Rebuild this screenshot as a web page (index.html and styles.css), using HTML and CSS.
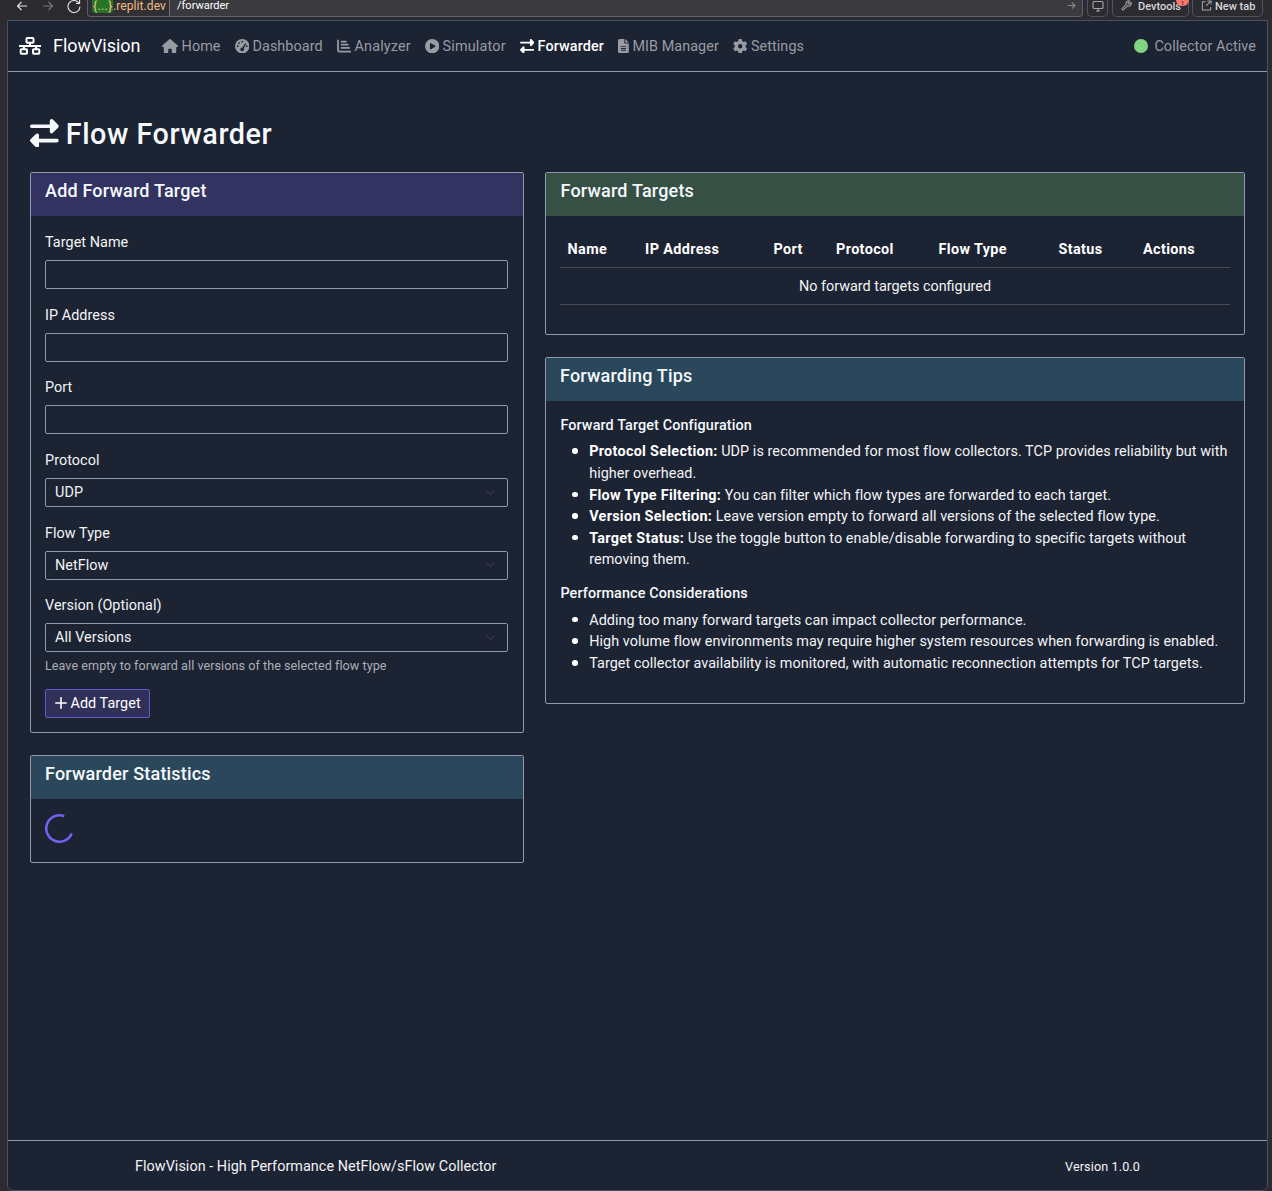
FILE: index.html
```html
<!DOCTYPE html>
<html lang="en">
<head>
<meta charset="utf-8">
<title>FlowVision - Flow Forwarder</title>
<link rel="stylesheet" href="styles.css">
</head>
<body>
<svg width="0" height="0" class="defs">
  <symbol id="swap" viewBox="0 0 512 512"><path d="M32 96l320 0 0-64c0-12.9 7.8-24.6 19.8-29.6s25.7-2.2 34.9 6.9l96 96c6 6 9.4 14.1 9.4 22.6s-3.4 16.6-9.4 22.6l-96 96c-9.2 9.2-22.9 11.9-34.9 6.9s-19.8-16.6-19.8-29.6l0-64L32 160c-17.7 0-32-14.3-32-32s14.3-32 32-32zM480 352c17.7 0 32 14.3 32 32s-14.3 32-32 32l-320 0 0 64c0 12.9-7.8 24.6-19.8 29.6s-25.7 2.2-34.9-6.9l-96-96c-6-6-9.4-14.1-9.4-22.6s3.4-16.6 9.4-22.6l96-96c9.2-9.2 22.9-11.9 34.9-6.9s19.8 16.6 19.8 29.6l0 64 320 0z"/></symbol>
</svg>
<div class="browser">
  <div class="toolbar">
    <svg class="tb-back" width="12" height="12" viewBox="0 0 12 12"><path d="M11 6H1.5M5.5 2l-4 4 4 4"/></svg>
    <svg class="tb-fwd" width="12" height="12" viewBox="0 0 12 12"><path d="M1 6h9.5M6.500 2l4 4-4 4"/></svg>
    <svg class="tb-reload" width="14" height="14" viewBox="0 0 14 14"><path d="M12 4.200A6 6 0 1 0 13 7.500M12.600 .8v3.700H9"/></svg>
    <div class="address">
      <span class="host"><span class="chip">{...}</span><span>.replit.dev</span></span>
      <span class="path">/forwarder</span>
      <svg class="go" width="9" height="9" viewBox="0 0 9 9"><path d="M.5 4.500h7.500M5 1.500l3 3-3 3"/></svg>
    </div>
    <div class="tb-btn screen"><svg width="12" height="12" viewBox="0 0 12 12"><rect x="1" y="1.500" width="10" height="7" rx="1"/><path d="M4 11h4M6 8.500V11"/></svg></div>
    <div class="tb-btn devtools"><svg width="11" height="11" viewBox="0 0 12 12"><path d="M1.500 10.500a1 1 0 0 1 0-1.500L5.500 5a3 3 0 0 1 4-3.800L7.700 3v1.400h1.400l1.800-1.800A3 3 0 0 1 7 6.500l-4 4a1 1 0 0 1-1.500 0z"/></svg><span>Devtools</span><span class="count">1</span></div>
    <div class="tb-btn newtab"><svg width="11" height="11" viewBox="0 0 12 12"><path d="M5 2H1.500v9h9V7.500M7 1h4v4M11 1L5.500 6.500"/></svg><span>New tab</span></div>
  </div>
  <div class="page">
    <nav class="navbar">
      <svg class="logo" width="22" height="18" viewBox="0 0 22 18"><rect x="7.500" y="1" width="7" height="4.800" rx=".8"/><rect x="1.700" y="12.200" width="6.300" height="4.600" rx=".8"/><rect x="14" y="12.200" width="6.300" height="4.600" rx=".8"/><path d="M11 6v3M0 9h22M4.900 9v3M17.100 9v3"/></svg>
      <span class="brand">FlowVision</span>
      <a class="nav n1"><svg width="16" height="14.400" viewBox="0 0 576 512"><path d="M575.8 255.500c0 18-15 32.100-32 32.100l-32 0 .7 160.200c0 2.700-.2 5.400-.5 8.100l0 16.200c0 22.100-17.900 40-40 40l-16 0c-1.100 0-2.200 0-3.300-.1c-1.400 .1-2.800 .1-4.200 .1L416 512l-24 0c-22.100 0-40-17.900-40-40l0-24 0-64c0-17.700-14.300-32-32-32l-64 0c-17.700 0-32 14.300-32 32l0 64 0 24c0 22.100-17.900 40-40 40l-24 0-31.900 0c-1.500 0-3-.1-4.500-.2c-1.200 .1-2.400 .2-3.600 .2l-16 0c-22.100 0-40-17.900-40-40l0-112c0-.9 0-1.900 .1-2.800l0-69.700-32 0c-18 0-32-14-32-32.100c0-9 3-17 10-24L266.400 8c7-7 15-8 22-8s15 2 21 7L564.800 231.500c8 7 12 15 11 24z"/></svg><span>Home</span></a>
      <a class="nav n2"><svg width="14.400" height="14.400" viewBox="0 0 512 512"><path fill-rule="evenodd" d="M256 0a256 256 0 1 0 0 512 256 256 0 1 0 0-512zM256 64a32 32 0 1 1 0 64 32 32 0 1 1 0-64zM144 112a32 32 0 1 1 0 64 32 32 0 1 1 0-64zM96 224a32 32 0 1 1 0 64 32 32 0 1 1 0-64zM416 224a32 32 0 1 1 0 64 32 32 0 1 1 0-64zM383 161c-7-8-22-12-31 3l-81 141c-5-1-10-1-15-1a64 64 0 1 0 54 30l78-146c4-9 2-20-5-27z"/></svg><span>Dashboard</span></a>
      <a class="nav n3"><svg class="stroke" width="14.400" height="14.400" viewBox="0 0 14.400 14.400"><path d="M1 1.500v9.300a1.800 1.800 0 0 0 1.800 1.800H13.600M4.500 2.700h4.500M4.500 5.700h6.300M4.500 8.900h7.600"/></svg><span>Analyzer</span></a>
      <a class="nav n4"><svg width="14.400" height="14.400" viewBox="0 0 512 512"><path fill-rule="evenodd" d="M256 0a256 256 0 1 0 0 512 256 256 0 1 0 0-512zM188 147c8-4 17-4 25 0l144 88c15 9 15 33 0 42l-144 88c-17 9-37-2-37-21V168c0-9 5-17 12-21z"/></svg><span>Simulator</span></a>
      <a class="nav n5 active"><svg width="14.400" height="14.400"><use href="#swap"/></svg><span>Forwarder</span></a>
      <a class="nav n6"><svg width="10.800" height="14.400" viewBox="0 0 384 512"><path fill-rule="evenodd" d="M64 0C29 0 0 29 0 64v384c0 35 29 64 64 64h256c35 0 64-29 64-64V160H256c-18 0-32-14-32-32V0zM256 0v128h128zM112 256h160a16 16 0 0 1 0 32H112a16 16 0 0 1 0-32zM112 320h160a16 16 0 0 1 0 32H112a16 16 0 0 1 0-32zM112 384h160a16 16 0 0 1 0 32H112a16 16 0 0 1 0-32z"/></svg><span>MIB Manager</span></a>
      <a class="nav n7"><svg width="14.400" height="14.400" viewBox="0 0 512 512"><path d="M495.900 166.600c3.200 8.700 .5 18.400-6.400 24.600l-43.300 39.400c1.100 8.300 1.700 16.800 1.700 25.400s-.6 17.100-1.700 25.400l43.300 39.400c6.900 6.200 9.600 15.900 6.400 24.600c-4.400 11.900-9.700 23.300-15.800 34.300l-4.700 8.100c-6.600 11-14 21.400-22.100 31.200c-5.900 7.200-15.700 9.600-24.500 6.800l-55.700-17.700c-13.400 10.300-28.200 18.900-44 25.400l-12.500 57.100c-2 9.100-9 16.300-18.200 17.800c-13.800 2.300-28 3.500-42.500 3.500s-28.700-1.200-42.500-3.500c-9.200-1.500-16.200-8.700-18.200-17.800l-12.500-57.100c-15.800-6.500-30.600-15.100-44-25.400L83.100 425.900c-8.800 2.800-18.600 .3-24.500-6.800c-8.100-9.800-15.500-20.200-22.100-31.200l-4.700-8.100c-6.100-11-11.400-22.400-15.800-34.300c-3.200-8.700-.5-18.400 6.400-24.600l43.300-39.400C64.600 273.100 64 264.600 64 256s.6-17.100 1.700-25.400L22.400 191.200c-6.900-6.200-9.600-15.900-6.400-24.600c4.400-11.900 9.700-23.300 15.800-34.300l4.700-8.100c6.600-11 14-21.400 22.100-31.200c5.900-7.200 15.700-9.600 24.500-6.800l55.700 17.700c13.400-10.300 28.200-18.900 44-25.400l12.500-57.100c2-9.100 9-16.300 18.200-17.800C227.300 1.200 241.500 0 256 0s28.700 1.200 42.500 3.500c9.200 1.500 16.200 8.700 18.200 17.800l12.500 57.100c15.800 6.500 30.600 15.100 44 25.400l55.700-17.700c8.800-2.800 18.600-.3 24.500 6.800c8.100 9.800 15.500 20.200 22.100 31.200l4.700 8.100c6.100 11 11.400 22.400 15.800 34.300zM256 336a80 80 0 1 0 0-160 80 80 0 1 0 0 160z"/></svg><span>Settings</span></a>
      <div class="status"><i class="dot"></i><span>Collector Active</span></div>
    </nav>
    <main class="main">
      <h1 class="title"><svg width="28.800" height="28.800"><use href="#swap"/></svg><span>Flow Forwarder</span></h1>
      <div class="columns">
        <div class="col">
          <section class="card">
            <h5 class="card-head purple">Add Forward Target</h5>
            <form class="card-body form">
              <div class="field"><label>Target Name</label><div class="control"></div></div>
              <div class="field"><label>IP Address</label><div class="control"></div></div>
              <div class="field"><label>Port</label><div class="control"></div></div>
              <div class="field"><label>Protocol</label><div class="control"><span>UDP</span><svg class="chev" width="11" height="8" viewBox="0 0 11 8"><path d="M1.500 1.500l4 4 4-4"/></svg></div></div>
              <div class="field"><label>Flow Type</label><div class="control"><span>NetFlow</span><svg class="chev" width="11" height="8" viewBox="0 0 11 8"><path d="M1.500 1.500l4 4 4-4"/></svg></div></div>
              <div class="field last"><label>Version (Optional)</label><div class="control"><span>All Versions</span><svg class="chev" width="11" height="8" viewBox="0 0 11 8"><path d="M1.500 1.500l4 4 4-4"/></svg></div></div>
              <div class="hint">Leave empty to forward all versions of the selected flow type</div>
              <div class="btn"><svg width="12" height="12" viewBox="0 0 12 12"><path d="M6 .8v10.400M.8 6h10.400"/></svg><span>Add Target</span></div>
            </form>
          </section>
          <section class="card">
            <h5 class="card-head teal">Forwarder Statistics</h5>
            <div class="card-body stats"><svg width="29" height="29" viewBox="0 0 29 29"><path d="M19.200 2.200A13.200 13.200 0 1 0 26.700 19.500"/></svg></div>
          </section>
        </div>
        <div class="col">
          <section class="card">
            <h5 class="card-head green">Forward Targets</h5>
            <div class="card-body">
              <table class="targets">
                <thead><tr><th class="c1">Name</th><th class="c2">IP Address</th><th class="c3">Port</th><th class="c4">Protocol</th><th class="c5">Flow Type</th><th class="c6">Status</th><th>Actions</th></tr></thead>
                <tbody><tr><td colspan="7">No forward targets configured</td></tr></tbody>
              </table>
            </div>
          </section>
          <section class="card">
            <h5 class="card-head teal">Forwarding Tips</h5>
            <div class="card-body tips">
              <h6>Forward Target Configuration</h6>
              <ul>
                <li><b>Protocol Selection:</b> UDP is recommended for most flow collectors. TCP provides reliability but with<br>higher overhead.</li>
                <li><b>Flow Type Filtering:</b> You can filter which flow types are forwarded to each target.</li>
                <li><b>Version Selection:</b> Leave version empty to forward all versions of the selected flow type.</li>
                <li><b>Target Status:</b> Use the toggle button to enable/disable forwarding to specific targets without<br>removing them.</li>
              </ul>
              <h6>Performance Considerations</h6>
              <ul>
                <li>Adding too many forward targets can impact collector performance.</li>
                <li>High volume flow environments may require higher system resources when forwarding is enabled.</li>
                <li>Target collector availability is monitored, with automatic reconnection attempts for TCP targets.</li>
              </ul>
            </div>
          </section>
        </div>
      </div>
    </main>
    <footer class="footer"><span>FlowVision - High Performance NetFlow/sFlow Collector</span><span class="version">Version 1.0.0</span></footer>
  </div>
</div>
</body>
</html>
```
FILE: styles.css
```css
* { box-sizing: border-box; }
body { margin: 0; background: #2b2b30; color: #f3f4f6; font: 14.4px/21.6px Roboto, "Noto Sans", sans-serif; letter-spacing: .05px; }
svg { flex: none; fill: currentColor; }
.defs { position: absolute; }
h1, h5, h6, ul, p { margin: 0; }
.browser { height: 1191px; padding: 0 4px 0 7px; display: flex; flex-direction: column; overflow: hidden; }

.toolbar { height: 20px; display: flex; flex: none; align-items: flex-start; font-size: 11px; line-height: 14px; color: #e4e4e7; letter-spacing: 0; }
.toolbar svg { fill: none; stroke: currentColor; stroke-width: 1.1; }
.tb-back { margin-left: 9px; }
.toolbar .tb-fwd { margin-left: 14px; color: #78787e; }
.tb-reload { margin: -1px 0 0 13px; }
.address { margin-left: 6px; width: 996px; height: 17px; border: 1px solid #5c6172; border-top: 0; border-radius: 0 0 4px 4px; background: #3b3b3f; display: flex; align-items: flex-start; overflow: hidden; }
.host { display: flex; width: 82px; height: 16px; padding-left: 4px; border-right: 1px solid #6b7080; color: #f2bd85; font-size: 12px; line-height: 12px; background: #303034; letter-spacing: .09px; }
.chip { background: #267326; width: 21px; height: 13px; padding-left: 1px; border-radius: 0 0 3px 3px; color: #eec78f; letter-spacing: .4px; }
.path { margin-left: 7px; line-height: 12px; color: #fff; }
.go { margin: 1px 6px 0 auto; color: #85858b; }
.tb-btn { position: relative; height: 17px; border: 1px solid #4e5366; border-top: 0; border-radius: 0 0 5px 5px; display: flex; align-items: flex-start; line-height: 13px; font-weight: 500; color: #d6d6da; }
.tb-btn svg { color: #a5a5ab; }
.screen { width: 21px; margin-left: 4px; padding-left: 4px; }
.devtools { width: 77px; margin-left: 4px; padding-left: 8px; gap: 6px; }
.newtab { width: 71px; margin-left: 3px; padding-left: 8px; gap: 3px; }
.count { position: absolute; right: -1px; top: 0; width: 13px; height: 6px; border-radius: 0 0 7px 7px; background: #f9776c; color: #40201e; font-size: 6px; line-height: 5px; text-align: center; }

.page { flex: 1; display: flex; flex-direction: column; background: #1c2333; border: 1px solid #4a5064; border-radius: 0 0 6px 6px; width: 1261px; }
.navbar { height: 51px; flex: none; display: flex; align-items: center; border-bottom: 1px solid #8e99ad; padding: 0 11px; color: #999ba3; letter-spacing: .06px; }
.navbar span { padding-top: 1.500px; }
.logo { fill: none; stroke: #fff; stroke-width: 2; }
.navbar .brand { font-size: 18px; color: #fff; margin-left: 12px; width: 109px; letter-spacing: -.05px; padding-top: .5px; }
.nav { display: flex; align-items: center; gap: 3.600px; }
.n1 { width: 72.500px; }
.n2 { width: 102px; }
.n3 { width: 88px; letter-spacing: .17px; }
.n4 { width: 95px; letter-spacing: .19px; }
.n5 { width: 98.500px; letter-spacing: .12px; }
.n6 { width: 115px; }
.active { color: #fff; font-weight: 500; }
.stroke { fill: none; stroke: currentColor; stroke-width: 1.800; stroke-linecap: round; }
.status { margin-left: auto; display: flex; align-items: center; gap: 6.500px; }
.dot { width: 14.400px; height: 14.400px; border-radius: 50%; background: #82d482; }

.main { flex: 1; padding: 44px 22px 0 22px; }
.title { display: flex; align-items: center; gap: 7px; height: 34px; margin-bottom: 22px; font-size: 28.800px; font-weight: 500; color: #f5f9fc; letter-spacing: .53px; }
.title span { padding-top: 3px; }
.columns { display: grid; grid-template-columns: 494px 700px; column-gap: 21px; align-items: start; }
.card { border: 1px solid #8e99ad; border-radius: 2px; margin-bottom: 21.600px; }
.card-head { height: 43.400px; padding: 6.800px 14px; font-size: 18px; font-weight: 500; line-height: 21px; color: #f5f9fc; letter-spacing: .19px; }
.purple { background: #333362; }
.teal { background: #2a475b; }
.green { background: #375045; padding-left: 14.500px; }
.card-body { padding: 14.700px 14.400px 14.900px; }
.form { padding: 15.100px 15px 14.500px 14px; }
.field { margin-bottom: 14.800px; }
.field label { display: block; padding-top: .8px; margin-bottom: 6.400px; }
.field.last { margin-bottom: 4.300px; }
.control { height: 29px; border: 1px solid #8e99ad; border-radius: 2px; padding: 0 11px 0 9px; display: flex; align-items: center; justify-content: space-between; }
.control span { padding-top: .6px; }
.chev { fill: none; stroke: #343a4a; stroke-width: 1.200; }
.hint { font-size: 12.600px; line-height: 18.900px; color: #adafb5; padding-top: .4px; margin-bottom: 13.300px; }
.btn { width: 105px; height: 28.800px; border: 1px solid #6558cf; border-radius: 2px; background: #303058; display: flex; align-items: center; gap: 3.500px; padding-left: 9px; color: #fff; }
.btn span { padding-top: 1.500px; }
.btn svg { stroke: #fff; stroke-width: 1.600; stroke-linecap: round; }
.stats { height: 62.300px; }
.stats svg { display: block; fill: none; stroke: #7361f2; stroke-width: 2.500; }

.targets { width: 100%; border-collapse: separate; border-spacing: 0; table-layout: fixed; margin-bottom: 14.400px; }
.targets th, .targets td { height: 37px; padding: 7px 7.200px 6.500px; border-bottom: 1px solid #464b59; text-align: left; white-space: nowrap; }
.targets th { color: #fff; font-weight: 700; letter-spacing: .36px; }
.targets td { text-align: center; letter-spacing: 0; }
.c1 { width: 77.500px; }
.c2 { width: 128.500px; }
.c3 { width: 62.500px; }
.c4 { width: 102.500px; }
.c5 { width: 120px; }
.c6 { width: 84.500px; }
.tips { padding-top: 15.600px; padding-bottom: 14px; }
h6 { font-size: 14.400px; line-height: 17.300px; font-weight: 500; margin-bottom: 7.200px; color: #f5f9fc; letter-spacing: .11px; }
ul { padding-left: 28.800px; margin-bottom: 14.400px; list-style: none; }
li { white-space: nowrap; }
li::before { content: ""; display: inline-block; width: 5.500px; height: 5.500px; margin: 0 11.500px 0 -17px; border-radius: 50%; background: #fff; vertical-align: 2.500px; }
b { color: #fff; letter-spacing: .29px; }

.footer { height: 50px; flex: none; border-top: 1px solid #8e99ad; display: flex; align-items: center; justify-content: space-between; padding: 3px 127px 0; letter-spacing: .04px; }
.version { font-size: 12.600px; letter-spacing: .12px; }
```
